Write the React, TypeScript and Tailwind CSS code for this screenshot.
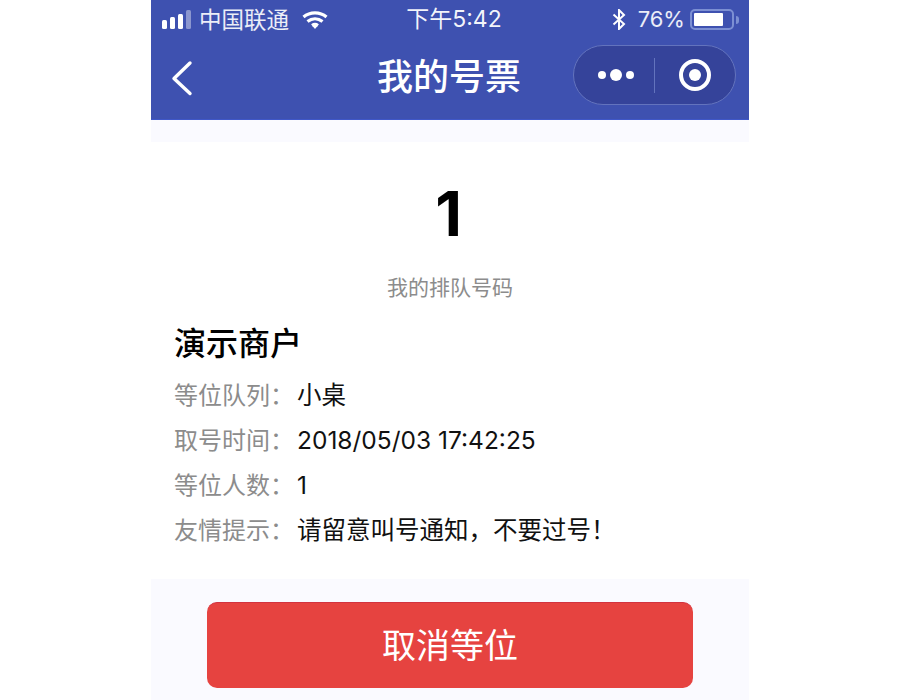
const FONT = "font-['Inter','Noto_Sans_CJK_SC',sans-serif]";

function SignalBars() {
  return (
    <div className="flex items-end gap-[3px]">
      <div className="h-[9px] w-[5px] rounded-[1.5px] bg-white" />
      <div className="h-[12px] w-[5px] rounded-[1.5px] bg-white" />
      <div className="h-[15px] w-[5px] rounded-[1.5px] bg-white" />
      <div className="h-[19px] w-[5px] rounded-[1.5px] bg-white/40" />
    </div>
  );
}

function Wifi() {
  return (
    <svg width="26" height="20" viewBox="0 0 26 20" fill="none" stroke="white" strokeWidth="3.2">
      <path d="M1.5 7C8 1.5 18 1.5 24.5 7" />
      <path d="M5.5 11.5C10 8 16 8 20.5 11.5" />
      <path d="M10 15.5C11.8 14.3 14.2 14.3 16 15.5" />
      <path d="M10.5 16L13 19L15.5 16Z" fill="white" stroke="none" />
    </svg>
  );
}

function Bluetooth() {
  return (
    <svg width="14" height="21" viewBox="0 0 14 21" fill="none" stroke="white" strokeWidth="2">
      <path d="M1.5 5.5L12 15L7 20V1L12 6L1.5 15.5" />
    </svg>
  );
}

function Battery() {
  return (
    <div className="flex items-center gap-[2px]">
      <div className="flex h-[21px] w-[44px] items-center rounded-[5px] border-2 border-[#7c8fd3] p-[2px]">
        <div className="h-full w-[80%] rounded-[1px] bg-white" />
      </div>
      <div className="h-[8px] w-[3px] rounded-r-full bg-[#7c8fd3]" />
    </div>
  );
}

function Capsule() {
  return (
    <div className="flex h-[60px] w-[163px] items-center rounded-full border border-[#6373bd] bg-[#35439a]">
      <div className="flex flex-1 items-center justify-center gap-[4px] pl-[3px]">
        <div className="h-[8px] w-[8px] rounded-full bg-white" />
        <div className="h-[12px] w-[12px] rounded-full bg-white" />
        <div className="h-[8px] w-[8px] rounded-full bg-white" />
      </div>
      <div className="h-[35px] w-px bg-[#6373bd]" />
      <div className="flex w-[80px] items-center justify-center">
        <div className="flex h-[32px] w-[32px] items-center justify-center rounded-full border-[4px] border-white">
          <div className="h-[12px] w-[12px] rounded-full bg-white" />
        </div>
      </div>
    </div>
  );
}

function InfoRow({ label, value }: { label: string; value: string }) {
  return (
    <div className="flex h-[45px] items-center text-[24px]">
      <span className="w-[124px] shrink-0 text-[#8c8c8c]">{label}</span>
      <span className="-ml-px text-[24.5px] text-[#111]">{value}</span>
    </div>
  );
}

export default function App() {
  return (
    <div className={`${FONT} flex h-[700px] w-[900px] justify-center overflow-hidden bg-white`}>
      <div className="flex h-full w-[598px] flex-col bg-[#fafaff]">
        <header className="h-[120px] shrink-0 border-b border-[#3f57c8] bg-[#3e51b0] text-white">
          <div className="grid h-[39px] grid-cols-3 items-center pr-[10px] pl-[11px]">
            <div className="flex items-center gap-[8px]">
              <SignalBars />
              <span className="text-[22.5px] text-white/90">中国联通</span>
              <span className="ml-[5px]"><Wifi /></span>
            </div>
            <div className="pl-[7px] text-center text-[23px] text-white/95">下午5:42</div>
            <div className="flex items-center justify-end">
              <Bluetooth />
              <span className="mr-[5px] ml-[12px] text-[22px] text-white/90">76%</span>
              <Battery />
            </div>
          </div>
          <div className="relative flex h-[80px] items-center justify-center pb-[4px]">
            <svg className="absolute left-[19px] top-[21px]" width="24" height="36" viewBox="0 0 24 36" fill="none" stroke="white" strokeWidth="3.4" strokeLinecap="round" strokeLinejoin="round">
              <path d="M20 3L4 18.5L20 33.5" />
            </svg>
            <h1 className="pr-[2px] text-[36px] font-medium">我的号票</h1>
            <div className="absolute right-[13px] top-[6px]"><Capsule /></div>
          </div>
        </header>

        <main className="mt-[22px] flex h-[437px] shrink-0 flex-col bg-white px-[23px]">
          <div className="mt-[34px] pr-[3px] text-center text-[62px] leading-[76px] font-bold text-black">1</div>
          <div className="mt-[22px] text-center text-[21px] leading-[28px] text-[#8c8c8c]">我的排队号码</div>
          <h2 className="mt-[20px] mb-[7px] text-[32px] leading-[44px] font-medium text-black">演示商户</h2>
          <InfoRow label="等位队列：" value="小桌" />
          <InfoRow label="取号时间：" value="2018/05/03 17:42:25" />
          <InfoRow label="等位人数：" value="1" />
          <InfoRow label="友情提示：" value="请留意叫号通知，不要过号！" />
        </main>

        <div className="flex justify-center pt-[23px]">
          <button className="h-[86px] w-[486px] rounded-[10px] border-t border-[#d23340] bg-[#e64340] text-[34px] text-white">取消等位</button>
        </div>
      </div>
    </div>
  );
}
